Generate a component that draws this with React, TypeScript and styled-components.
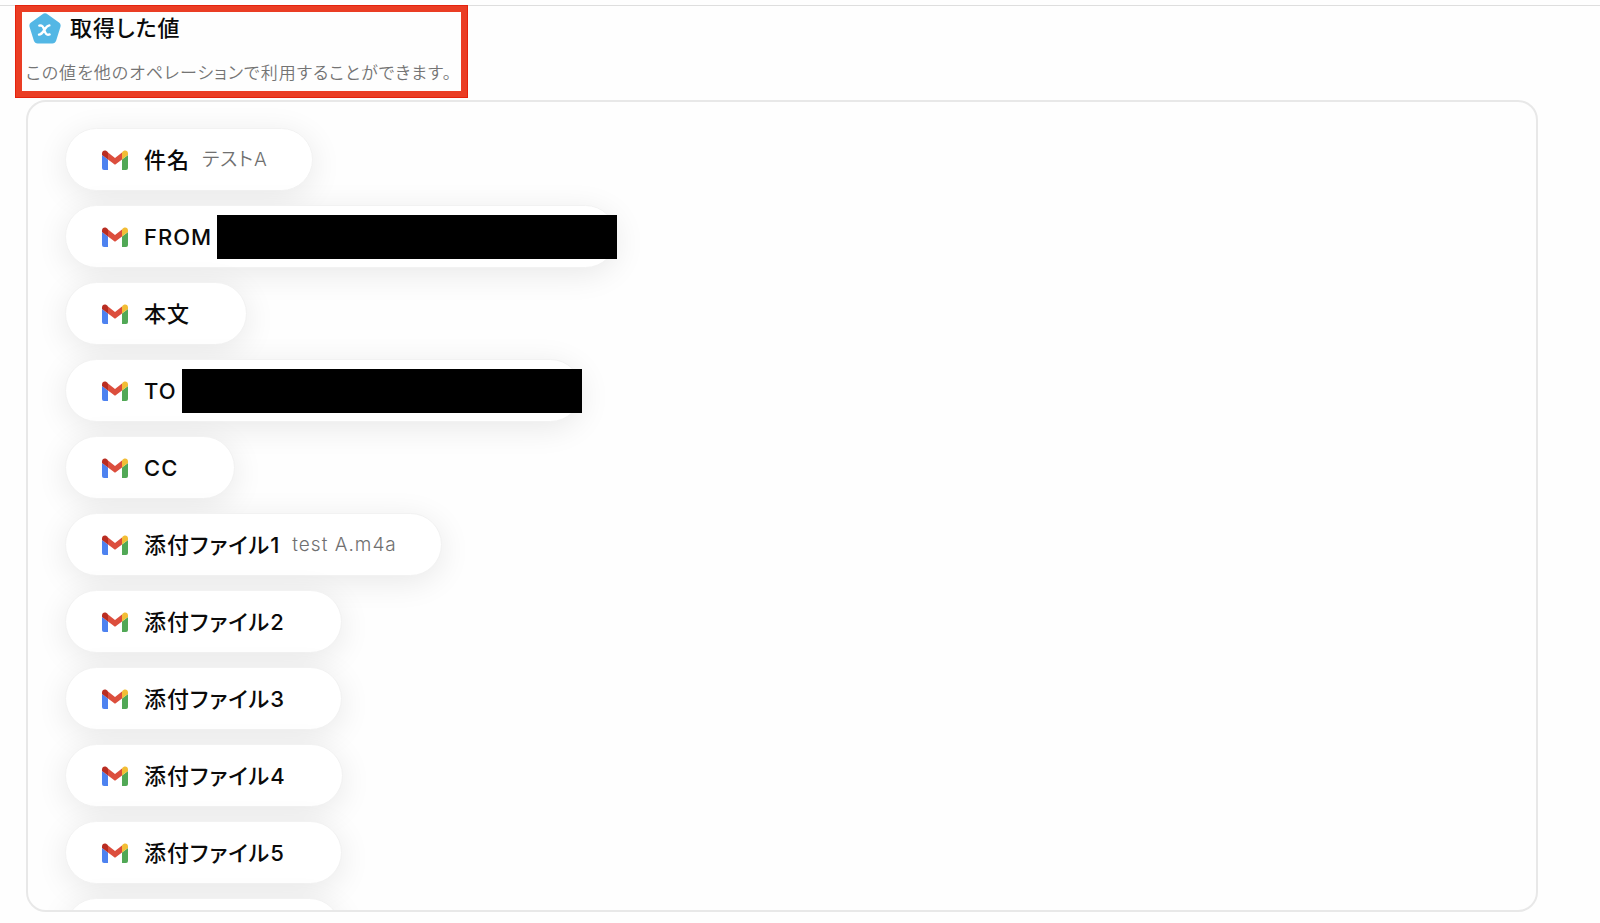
import React from "react";
import styled, { createGlobalStyle } from "styled-components";

const GlobalStyle = createGlobalStyle`
  *, *::before, *::after { box-sizing: border-box; }
  body {
    margin: 0;
    background: #fefefe;
    color: #0a0a0a;
    font-family: Inter, "Noto Sans CJK JP", sans-serif;
    font-feature-settings: "palt";
  }
`;

const Page = styled.main`
  display: flex;
  flex-direction: column;
  height: 100vh;
  padding: 5px 62px 11px 0;
`;

const TopRule = styled.hr`
  flex: none;
  width: calc(100% + 62px);
  height: 1px;
  margin: 0;
  border: 0;
  background: #dedede;
`;

const Callout = styled.header`
  position: relative;
  display: flex;
  flex-direction: column;
  gap: 9px;
  width: fit-content;
  height: 93px;
  margin: -1px 0 2px 15px;
  padding: 0 9px 0 4px;
  border: 7px solid #ea3d24;
  outline: 1px solid #e5210c;
  outline-offset: -1px;
`;

const TitleRow = styled.div`
  display: flex;
  align-items: flex-start;
  gap: 9px;
  height: 33px;
  padding: 1px 0 0 3px;
`;

const Title = styled.h1`
  margin: 0;
  font-family: "Noto Sans CJK JP", sans-serif;
  font-size: 22px;
  line-height: 26px;
  font-weight: 500;
  letter-spacing: 1px;
`;

const Description = styled.p`
  margin: 0;
  color: #747474;
  font-family: "Noto Sans CJK JP", sans-serif;
  font-size: 17px;
  line-height: 36px;
  font-weight: 350;
  letter-spacing: 1px;
`;

const Panel = styled.section`
  flex: 1;
  min-height: 0;
  margin-left: 26px;
  padding: 26px 37px 0;
  overflow: hidden;
  border: 2px solid #e8e8e8;
  border-radius: 20px;
`;

const ValueList = styled.ul`
  display: flex;
  flex-direction: column;
  align-items: flex-start;
  gap: 14px;
  margin: 0;
  padding: 0;
  list-style: none;
`;

const Pill = styled.button<{ $redacted?: boolean }>`
  display: flex;
  align-items: center;
  height: 63px;
  padding: 0 ${(p) => (p.$redacted ? 0 : 44)}px 0 36px;
  border: 1px solid #f2f2f2;
  border-radius: 32px;
  background: #fff;
  color: inherit;
  font: inherit;
  letter-spacing: 1px;
  white-space: nowrap;
  box-shadow: 0 6px 32px rgba(0, 0, 0, 0.09);
`;

const EmptyPill = styled(Pill).attrs({ as: "div" })`
  width: 276px;
`;

const Label = styled.span`
  margin-left: 16px;
  font-size: 22px;
  line-height: 32px;
  font-weight: 500;
`;

const Value = styled.span`
  margin-left: 12px;
  color: #707070;
  font-size: 19px;
  line-height: 32px;
  font-weight: 350;
`;

const Redaction = styled.span`
  width: 400px;
  height: 44px;
  margin: 0 -1px 0 5px;
  background: #000;
`;

const GmailIcon = () => (
  <svg width="26" height="20" viewBox="0 0 26 20" aria-hidden="true">
    <path d="M0 5l6 4.500V20H2a2 2 0 0 1-2-2Z" fill="#4d82f0" />
    <path d="M26 5l-6 4.500V20h4a2 2 0 0 0 2-2Z" fill="#51a856" />
    <path d="M6 2.500L13 8l7-5.500v7L13 14.800 6 9.500Z" fill="#dc4e3d" />
    <path d="M0 3.500C0 .5 3.200-.8 5.500 1.800L6 2.500v7L0 5Z" fill="#b92d22" />
    <path d="M26 3.500C26 .5 22.800-.8 20.500 1.800L20 2.500v7L26 5Z" fill="#f2bd35" />
  </svg>
);

const VariableIcon = () => (
  <svg width="32" height="31" viewBox="0 0 32 31" aria-hidden="true">
    <path
      d="M13.500 1.200Q16-.5 18.500 1.200L30 9.500Q32.300 11.200 31.400 14L27.200 27.500Q26.200 30.500 23.300 30.500H8.700Q5.800 30.500 4.800 27.500L.6 14Q-.3 11.200 2 9.500Z"
      fill="#53b7e5"
    />
    <path
      d="M10.300 12.600C13.300 11.900 14.200 13.500 15.300 17S17.600 22.700 20.600 21.400M20.400 12.400C18 12.600 16.600 15 15.300 17S12.300 21.800 10 21.600"
      fill="none"
      stroke="#fff"
      strokeWidth="2.400"
      strokeLinecap="round"
    />
  </svg>
);

type Item = { label: string; value?: string; redacted?: boolean };

const items: Item[] = [
  { label: "件名", value: "テストA" },
  { label: "FROM", redacted: true },
  { label: "本文" },
  { label: "TO", redacted: true },
  { label: "CC" },
  { label: "添付ファイル1", value: "test A.m4a" },
  { label: "添付ファイル2" },
  { label: "添付ファイル3" },
  { label: "添付ファイル4" },
  { label: "添付ファイル5" },
];

export default function App() {
  return (
    <>
      <GlobalStyle />
      <Page>
        <TopRule />
        <Callout>
          <TitleRow>
            <VariableIcon />
            <Title>取得した値</Title>
          </TitleRow>
          <Description>この値を他のオペレーションで利用することができます。</Description>
        </Callout>
        <Panel>
          <ValueList>
            {items.map((item) => (
              <li key={item.label}>
                <Pill type="button" $redacted={item.redacted}>
                  <GmailIcon />
                  <Label>{item.label}</Label>
                  {item.redacted ? <Redaction /> : <Value>{item.value}</Value>}
                </Pill>
              </li>
            ))}
            <li>
              <EmptyPill />
            </li>
          </ValueList>
        </Panel>
      </Page>
    </>
  );
}
